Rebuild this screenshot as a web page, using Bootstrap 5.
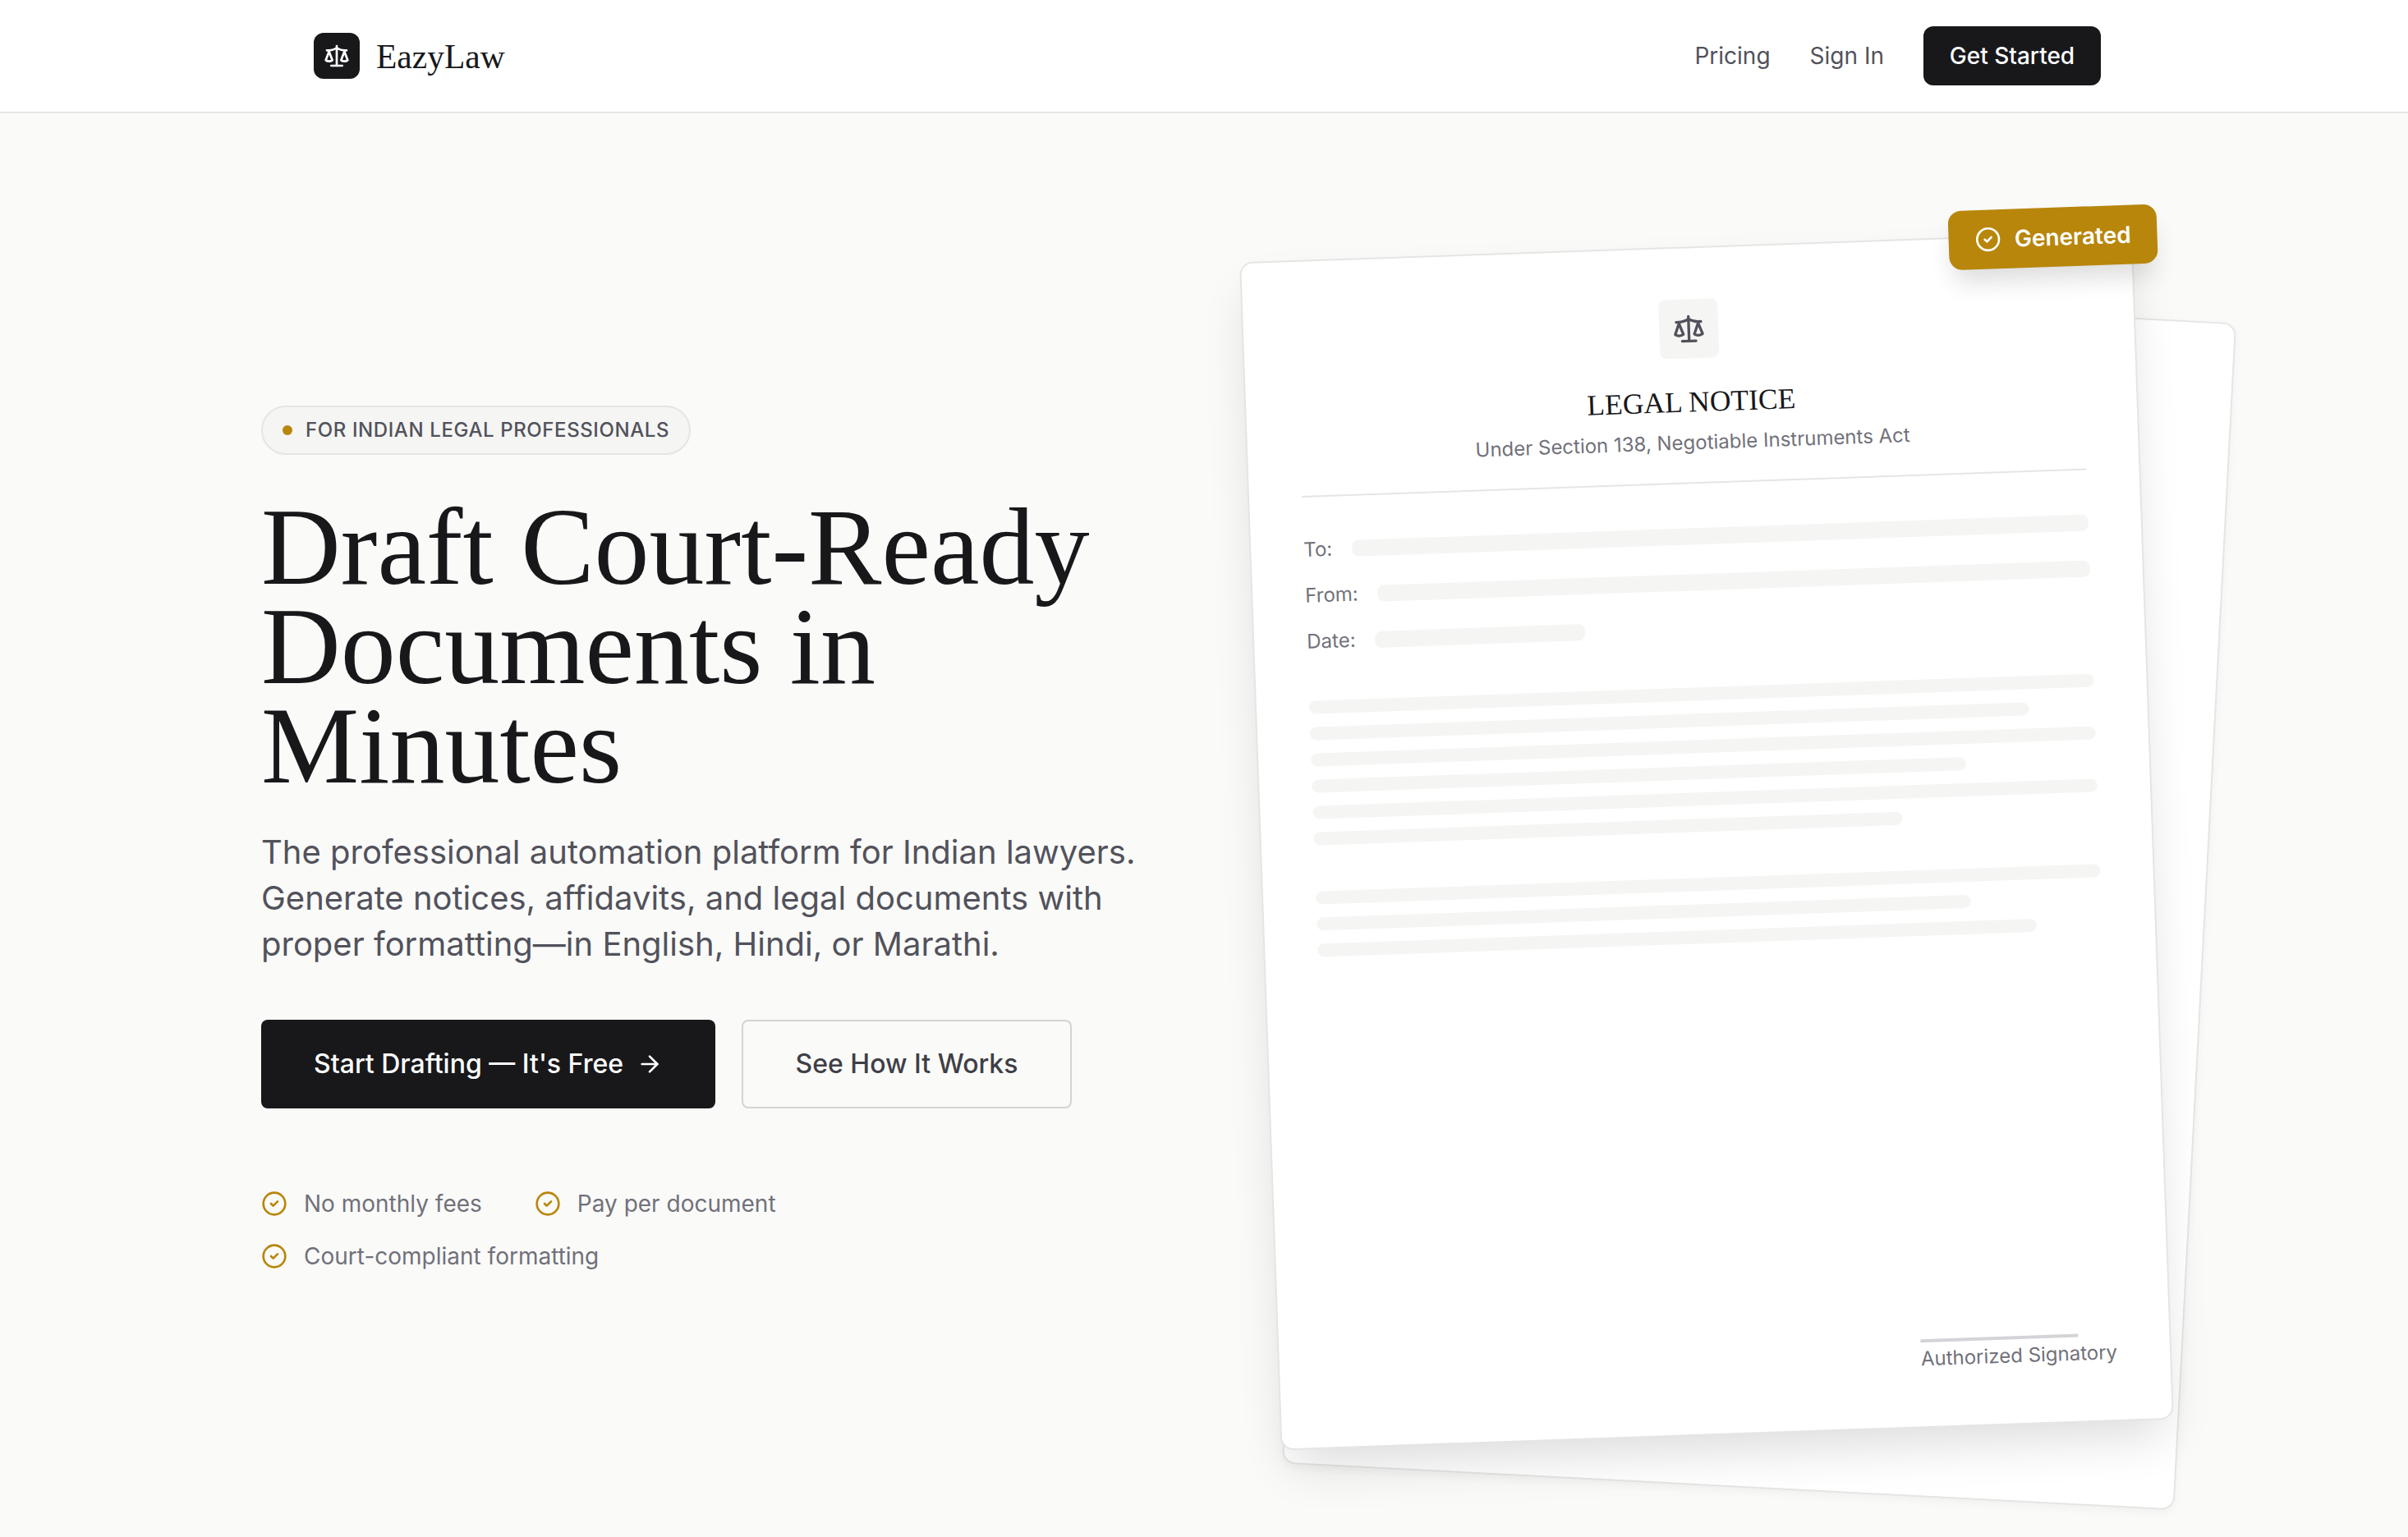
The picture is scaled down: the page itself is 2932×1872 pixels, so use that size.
<!DOCTYPE html>
<html lang="en">
<head>
    <meta charset="UTF-8">
    <meta name="viewport" content="width=device-width, initial-scale=1.0">
    <title>EazyLaw</title>
    <link href="https://cdn.jsdelivr.net/npm/bootstrap@5.3.0/dist/css/bootstrap.min.css" rel="stylesheet">
    <style>
        body {
            font-family: Inter, "Liberation Sans", sans-serif;
            background: #fafaf9;
            color: #18181b;
            height: 1872px;
            overflow: hidden;
        }
        .topbar {
            height: 138px;
            background: #fff;
            border-bottom: 2px solid #e7e5e4;
            padding: 0 374px 0 382px;
        }
        .logo-box {
            width: 56px;
            height: 56px;
            background: #18181b;
            border-radius: 12px;
        }
        .logo-text {
            font-family: "Liberation Serif", serif;
            font-size: 41.5px;
            color: #18181b;
            margin: 2px 0 0 20px;
        }
        .toplink {
            font-size: 28px;
            color: #52525b;
            text-decoration: none;
        }
        .btn-ink {
            background: #18181b;
            color: #fff;
            border: 0;
            font-weight: 500;
        }
        .btn-ink:hover { background: #27272a; color: #fff; }
        .btn-top {
            width: 216px;
            height: 72px;
            font-size: 28px;
            border-radius: 12px;
        }
        .hero {
            padding: 162px 310px 0 318px;
        }
        .hero-left {
            width: 1100px;
            margin-bottom: 8px;
        }
        .pill {
            height: 60px;
            padding: 0 24px;
            background: #f5f5f4;
            border: 2px solid #e7e5e4;
            font-size: 24px;
            font-weight: 500;
            letter-spacing: .6px;
            color: #52525b;
        }
        .pill-dot {
            width: 12px;
            height: 12px;
            background: #b8860b;
            margin-right: 16px;
        }
        .hero-title {
            font-family: "Liberation Serif", serif;
            font-size: 134px;
            font-weight: 400;
            line-height: 121px;
            margin: 52px 0 41px;
        }
        .hero-copy {
            font-size: 40px;
            line-height: 56px;
            color: #52525b;
            margin-bottom: 64px;
        }
        .hero-actions { gap: 32px; }
        .btn-big {
            height: 108px;
            font-size: 32px;
            border-radius: 8px;
            font-weight: 500;
        }
        .btn-start { width: 553px; }
        .btn-how {
            width: 402px;
            border: 2px solid #d6d3d1;
            background: transparent;
            color: #3f3f46;
        }
        .checks {
            margin-top: 100px;
            gap: 32px 64px;
            font-size: 28px;
            color: #71717a;
        }
        .check-item { gap: 20px; height: 32px; }
        .stage {
            width: 1088px;
            height: 1448px;
            position: relative;
        }
        .sheet {
            width: 1088px;
            height: 1448px;
            background: #fff;
            border: 2px solid #e7e5e4;
            border-radius: 16px;
        }
        .sheet-back {
            position: absolute;
            left: 64px;
            top: 64px;
            transform: rotate(3deg);
            box-shadow: 0 4px 12px rgba(0, 0, 0, .04);
        }
        .sheet-front {
            position: relative;
            padding: 62px 64px;
            transform: rotate(-2deg);
            box-shadow: 0 30px 60px -12px rgba(0, 0, 0, .14);
        }
        .stamp {
            position: absolute;
            top: -34px;
            right: -32px;
            height: 72px;
            padding: 0 32px;
            gap: 16px;
            background: #b8860b;
            border-radius: 16px;
            color: #fff;
            font-size: 28px;
            font-weight: 600;
            box-shadow: 0 20px 30px -6px rgba(0, 0, 0, .14);
        }
        .sheet-head {
            padding-bottom: 32px;
            border-bottom: 2px solid #e7e5e4;
            margin-bottom: 48px;
        }
        .seal {
            width: 72px;
            height: 72px;
            background: #f5f5f4;
            border-radius: 8px;
            margin-bottom: 29px;
        }
        .sheet-title {
            font-family: "Liberation Serif", serif;
            font-size: 35.5px;
            font-weight: 400;
            line-height: 48px;
            margin: 0 0 10px;
        }
        .sheet-sub {
            font-size: 24px;
            line-height: 32px;
            color: #71717a;
        }
        .field {
            height: 32px;
            gap: 24px;
            font-size: 24px;
            color: #71717a;
            margin-bottom: 24px;
        }
        .field-bar {
            height: 20px;
            background: #f5f5f4;
            border-radius: 8px;
        }
        .text-block {
            display: flex;
            flex-direction: column;
            gap: 16px;
        }
        .text-block-first { margin: 56px 0 56px; }
        .text-line {
            height: 16px;
            background: #f5f5f4;
            border-radius: 8px;
        }
        .sign {
            margin-top: auto;
            margin-bottom: 4px;
            font-size: 24px;
            line-height: 32px;
            color: #71717a;
        }
        .sign-rule {
            width: 192px;
            height: 4px;
            background: #d4d4d8;
            margin-bottom: 4px;
        }
        .ico {
            fill: none;
            stroke: currentColor;
            stroke-width: 2;
            stroke-linecap: round;
            stroke-linejoin: round;
        }
        .ico-gold { color: #b8860b; }
        .ico-seal { color: #52525b; }
    </style>
</head>
<body>
    <svg class="d-none">
        <symbol id="scale" viewBox="0 0 24 24">
            <path d="m16 16 3-8 3 8c-.87.65-1.92 1-3 1s-2.13-.35-3-1Z"/>
            <path d="m2 16 3-8 3 8c-.87.65-1.92 1-3 1s-2.13-.35-3-1Z"/>
            <path d="M7 21h10"/>
            <path d="M12 3v18"/>
            <path d="M3 7h2c2 0 5-1 7-2 2 1 5 2 7 2h2"/>
        </symbol>
        <symbol id="check" viewBox="0 0 24 24">
            <circle cx="12" cy="12" r="10"/>
            <path d="m9 12 2 2 4-4"/>
        </symbol>
    </svg>

    <nav class="topbar d-flex align-items-center justify-content-between">
        <a class="d-flex align-items-center text-decoration-none" href="#">
            <span class="logo-box d-flex align-items-center justify-content-center text-white">
                <svg class="ico" width="32" height="32"><use href="#scale"/></svg>
            </span>
            <span class="logo-text">EazyLaw</span>
        </a>
        <div class="d-flex align-items-center">
            <a class="toplink" href="#">Pricing</a>
            <a class="toplink ms-5" href="#">Sign In</a>
            <a class="btn btn-ink btn-top d-flex align-items-center justify-content-center ms-5" href="#">Get Started</a>
        </div>
    </nav>

    <main class="hero d-flex align-items-center justify-content-between">
        <section class="hero-left">
            <span class="pill d-inline-flex align-items-center rounded-pill">
                <span class="pill-dot rounded-circle"></span>FOR INDIAN LEGAL PROFESSIONALS
            </span>
            <h1 class="hero-title">Draft Court-Ready Documents in Minutes</h1>
            <p class="hero-copy">The professional automation platform for Indian lawyers. Generate notices, affidavits, and legal documents with proper formatting—in English, Hindi, or Marathi.</p>
            <div class="hero-actions d-flex">
                <a class="btn btn-ink btn-big btn-start d-flex align-items-center justify-content-center gap-3" href="#">
                    Start Drafting — It's Free
                    <svg class="ico" width="32" height="32" viewBox="0 0 24 24"><path d="M5 12h14"/><path d="m12 5 7 7-7 7"/></svg>
                </a>
                <a class="btn btn-big btn-how d-flex align-items-center justify-content-center" href="#">See How It Works</a>
            </div>
            <div class="checks d-flex flex-wrap">
                <div class="check-item d-flex align-items-center"><svg class="ico ico-gold" width="32" height="32"><use href="#check"/></svg>No monthly fees</div>
                <div class="check-item d-flex align-items-center"><svg class="ico ico-gold" width="32" height="32"><use href="#check"/></svg>Pay per document</div>
                <div class="check-item d-flex align-items-center"><svg class="ico ico-gold" width="32" height="32"><use href="#check"/></svg>Court-compliant formatting</div>
            </div>
        </section>

        <section class="stage">
            <div class="sheet sheet-back"></div>
            <article class="sheet sheet-front d-flex flex-column">
                <div class="stamp d-flex align-items-center">
                    <svg class="ico" width="32" height="32"><use href="#check"/></svg>Generated
                </div>
                <header class="sheet-head d-flex flex-column align-items-center">
                    <div class="seal d-flex align-items-center justify-content-center">
                        <svg class="ico ico-seal" width="40" height="40"><use href="#scale"/></svg>
                    </div>
                    <h2 class="sheet-title">LEGAL NOTICE</h2>
                    <div class="sheet-sub">Under Section 138, Negotiable Instruments Act</div>
                </header>
                <div class="field d-flex align-items-center">To:<div class="field-bar flex-grow-1"></div></div>
                <div class="field d-flex align-items-center">From:<div class="field-bar flex-grow-1"></div></div>
                <div class="field d-flex align-items-center mb-0">Date:<div class="field-bar" style="width:256px"></div></div>
                <div class="text-block text-block-first">
                    <div class="text-line" style="width:100%"></div>
                    <div class="text-line" style="width:91.67%"></div>
                    <div class="text-line" style="width:100%"></div>
                    <div class="text-line" style="width:83.33%"></div>
                    <div class="text-line" style="width:100%"></div>
                    <div class="text-line" style="width:75%"></div>
                </div>
                <div class="text-block">
                    <div class="text-line" style="width:100%"></div>
                    <div class="text-line" style="width:83.33%"></div>
                    <div class="text-line" style="width:91.67%"></div>
                </div>
                <div class="sign align-self-end">
                    <div class="sign-rule"></div>
                    Authorized Signatory
                </div>
            </article>
        </section>
    </main>
    <script src="https://cdn.jsdelivr.net/npm/bootstrap@5.3.0/dist/js/bootstrap.bundle.min.js"></script>
</body>
</html>
